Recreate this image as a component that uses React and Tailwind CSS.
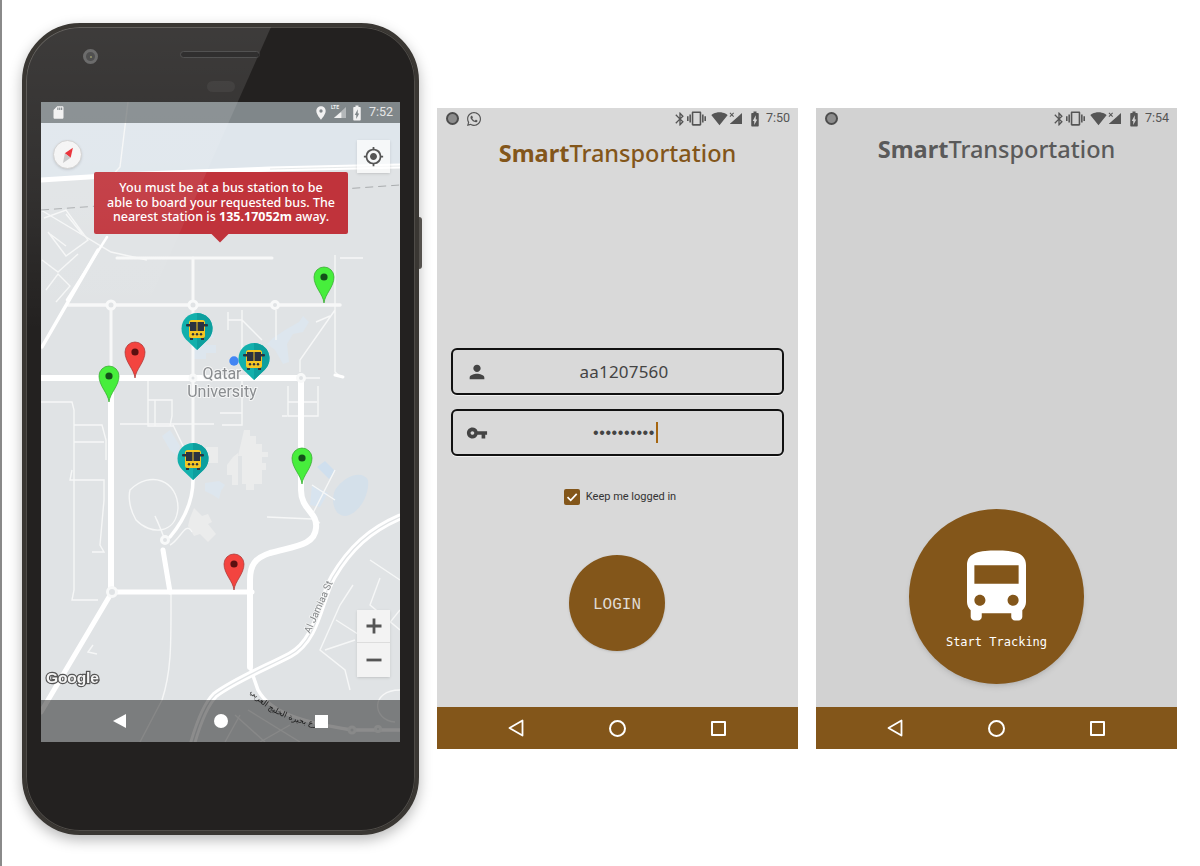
import React from "react";
import {
  MdPerson,
  MdVpnKey,
  MdBluetooth,
  MdVibration,
  MdSignalWifi4Bar,
  MdBatteryChargingFull,
  MdLocationOn,
  MdSdCard,
  MdGpsFixed,
} from "react-icons/md";
import { FaWhatsapp } from "react-icons/fa";

const titleFont = "font-['Noto_Sans',sans-serif]";

const Pin = ({ x, y, color = "green" }) => {
  const fill = color === "green" ? "#47ee3c" : "#f3443f";
  const edge = color === "green" ? "#2fa52a" : "#a83230";
  const dot = color === "green" ? "#14501a" : "#5a1010";
  return (
    <g transform={`translate(${x - 10} ${y - 36})`}>
      <path d="M10 36C9 27 0 20 0 10A10 10 0 0 1 20 10C20 20 11 27 10 36Z" fill={fill} stroke={edge} strokeWidth="0.7" />
      <circle cx="10" cy="10" r="3.6" fill={dot} />
    </g>
  );
};

const BusPin = ({ x, y }) => (
  <g transform={`translate(${x - 15.5} ${y - 37})`}>
    <path d="M15.5 37L4.5 26.5A15.5 15.5 0 1 1 26.5 26.5Z" fill="#12b0ac" strokeLinejoin="round" />
    <path d="M15.5 37L26.5 26.5A15.5 15.5 0 0 0 15.5 0Z" fill="#0d9f9e" />
    <rect x="7.5" y="7" width="16" height="18" rx="2.5" fill="#f5c623" />
    <rect x="4.5" y="11" width="22" height="2.5" rx="1" fill="#2b3240" />
    <rect x="8.5" y="9" width="14" height="9" fill="#2b3240" />
    <rect x="15" y="9" width="1" height="9" fill="#f5c623" />
    <circle cx="11.5" cy="21.3" r="1.2" fill="#2b3240" />
    <circle cx="15.5" cy="21.3" r="1.2" fill="#2b3240" />
    <circle cx="19.5" cy="21.3" r="1.2" fill="#2b3240" />
    <rect x="8.5" y="25" width="3" height="2" fill="#2b3240" />
    <rect x="19.5" y="25" width="3" height="2" fill="#2b3240" />
  </g>
);

const MapDrawing = () => (
  <svg viewBox="41 102 359 640" className="block w-full h-full blur-[0.4px]">
    <defs>
      <path id="arabic-road" d="M250 692C262 708 282 718 300 723C315 727 325 729 345 730" />
    </defs>
    <rect x="41" y="102" width="359" height="640" fill="#e0e3e5" />
    <path d="M41 102H400V166L41 180Z" fill="#dfe6ec" />

    {/* buildings and water */}
    <g fill="#dde6ee">
      <path d="M200 330h12l2 8h-8v7h10v8h-10v6h-14v-16h8z" />
      <path d="M273 338l12-8 14-8 4-6 6 6 -6 10-10 2-6 10 2 18-6 2-8-14-8-6z" />
      <path d="M170 430l10 16 -2 10-8-6-8-14z" />
      <path d="M205 483l14-2 6 4-4 6-2 8-6-4-8-4z" />
      <path d="M317 467l8-6 10 10-6 8z" fill="#cfdfee" />
      <path d="M312 485l8 4 8 4-8 14-10-2z" fill="#d8e4ef" />
      <path d="M335 490C345 475 362 470 368 480C370 495 358 515 345 516C335 516 330 502 335 490Z" fill="#d4e0ea" />
    </g>
    <g fill="#ebecec">
      <path d="M244 430h6v6h6v8h6v8h6v5h-6v6h4v7h-4v14h-8v6h-8v-6h-4v-28h-4z" />
      <path d="M233 457l5-4v32h-6v-10h-5v-10z" />
      <path d="M206 447h12v16h-12z" />
      <path d="M194 508l8 8 6-2 4 8 -4 2 8 10-8 8-8-8-6 2-6-10 2-8z" />
    </g>

    {/* thin lanes and blocks */}
    <g fill="none" stroke="#f6f7f7" strokeWidth="1.4">
      <path d="M128 102L120 167L108 180" />
      <path d="M41 210l30 18 40 24 36 8" />
      <path d="M44 218l22-8 22 30-22 16-18-24M50 234l16 12M66 214l16 20M42 260l16 12 20-18M46 290l12-16 12 12-14 16" />
      <path d="M41 402H72L74 410V540L74 590L72 600L98 600" />
      <path d="M74 425H102L106 440V460M74 442H104M72 470L70 480H104V500L100 545L104 552H92" />
      <path d="M148 378V426H174M148 400H172V416L170 426H148M155 400V426M120 424H214" />
      <path d="M242 413H220M242 378V425H222M242 310V358M228 320H242L262 340M228 312V330" />
      <path d="M284 378H320M288 386V416H318V386M288 402H317M287 416H282" />
      <path d="M276 310V340M335 255V372L340 376M340 258H363M335 310L300 360L300 372M316 322L330 316" />
      <path d="M173 425L185 450" />
      <path d="M130 490C150 470 178 480 178 508C176 535 150 535 136 520C130 510 128 498 130 490Z" />
      <path d="M157 520L165 540M155 516L162 532M192 532C186 520 180 540 170 545" />
      <path d="M267 517L312 519L320 523M335 470L312 515M312 485L335 500" />
      <path d="M171 592C171 640 172 670 162 700L140 742" />
      <path d="M336 620L375 645M353 585L340 605L320 650L345 670L350 690M400 610L360 660M370 560L400 580M380 578L370 605L400 630M325 650L355 640" />
      <path d="M400 690C370 690 372 720 395 722" />
      <path d="M235 715L265 742M248 710L300 742M290 725L260 742M225 742L240 715" />
      <path d="M93 645L88 652L97 654" />
    </g>

    {/* main roads */}
    <g fill="none" stroke="#ffffff" strokeLinecap="round">
      <path d="M41 180L120 175L270 169L400 166" strokeWidth="5" />
      <path d="M68 305H340" strokeWidth="3.5" stroke="#f7f8f8" />
      <path d="M117 258H272" strokeWidth="3" stroke="#f7f8f8" />
      <path d="M98 250L42 347" strokeWidth="3.5" />
      <path d="M107 237L67 300" strokeWidth="2.5" />
      <path d="M111 305V378M193 258V478" strokeWidth="3" stroke="#f7f8f8" />
      <path d="M41 378H302" strokeWidth="6" />
      <path d="M111 378V592" strokeWidth="6" />
      <path d="M301 378V490C301 510 318 512 316 528C315 545 295 546 270 553C255 558 250 565 250 580V667" strokeWidth="6" />
      <path d="M112 592H252" strokeWidth="5" />
      <path d="M112 592L41 712" strokeWidth="5" />
      <path d="M163 550L170 592" strokeWidth="5" />
      <path d="M193 480C193 505 180 525 170 537" strokeWidth="3.5" />
      <path d="M335 375L343 377" strokeWidth="3" />
      <path d="M400 517C370 530 350 548 333 577C320 600 318 640 290 655C265 668 235 680 215 695C205 705 198 725 193 742" strokeWidth="7" />
      <path d="M250 667L258 690C270 712 300 722 352 730H400" strokeWidth="3.5" />
    </g>
    <path d="M400 517C370 530 350 548 333 577C320 600 318 640 290 655C265 668 235 680 215 695C205 705 198 725 193 742" fill="none" stroke="#e0e3e5" strokeWidth="1.3" />
    <path d="M270 169L400 166" fill="none" stroke="#e0e3e5" strokeWidth="0.8" />
    <g fill="#e0e3e5" stroke="#f8f9f9" strokeWidth="3">
      <circle cx="111" cy="305" r="4" />
      <circle cx="193" cy="305" r="4" />
      <circle cx="275" cy="305" r="3.5" />
      <circle cx="193" cy="378" r="3" />
      <circle cx="301" cy="378" r="3.5" />
      <circle cx="112" cy="592" r="4.5" />
      <circle cx="165" cy="540" r="3.5" />
      <circle cx="352" cy="730" r="3" />
      <circle cx="378" cy="729" r="2.5" />
    </g>
    <path d="M41 210L400 185" stroke="#a9acae" strokeWidth="1" strokeDasharray="8 5" fill="none" />

    {/* map labels */}
    <g fontFamily="Roboto, sans-serif" fill="#8a8d90" textAnchor="middle" fontSize="16" stroke="#f4f5f5" strokeWidth="2" paintOrder="stroke">
      <text x="222" y="379">Qatar</text>
      <text x="222" y="397">University</text>
    </g>
    <text x="0" y="0" transform="translate(310 634) rotate(-66)" fontFamily="Roboto, sans-serif" fontSize="10" fill="#85888a" stroke="#f4f5f5" strokeWidth="1.5" paintOrder="stroke">Al Jamiaa St</text>
    <text fontFamily="'DejaVu Sans', sans-serif" fontSize="8" fill="#333333">
      <textPath href="#arabic-road">شارع بحيرة الخليج العربي</textPath>
    </text>
    <text x="46" y="683" fontFamily="'Liberation Sans', sans-serif" fontSize="15.5" fontWeight="700" fill="#f5f5f5" stroke="#555555" strokeWidth="2.4" paintOrder="stroke" letterSpacing="-0.1">Google</text>

    {/* markers */}
    <Pin x={324} y={303} />
    <Pin x={135} y={378} color="red" />
    <Pin x={109} y={402} />
    <Pin x={302} y={484} />
    <Pin x={234} y={590} color="red" />
    <circle cx="234" cy="361" r="4.7" fill="#4285f4" />
    <BusPin x={197} y={350} />
    <BusPin x={254} y={380} />
    <BusPin x={193} y={480} />
  </svg>
);

const Compass = () => (
  <svg viewBox="0 0 30 30" className="w-[30px] h-[30px]">
    <path d="M21 7L18.5 18L12 13Z" fill="#e8242c" />
    <path d="M12 13L18.5 18L10 24Z" fill="#c4c5c6" />
  </svg>
);

const SignalIcon = ({ color, x }) => (
  <svg viewBox="0 0 16 14" className="w-[15px] h-[13px]">
    <path d="M15 1V13H2Z" fill={color} opacity={x ? 1 : 0.45} />
    <path d="M10 7V13H2L9 7Z" fill={color} />
    {x && <path d="M2 1l4 4M6 1L2 5" stroke={color} strokeWidth="1.1" />}
  </svg>
);

const PhoneScreen = () => (
  <div className="relative w-[359px] h-[640px] mx-auto overflow-hidden">
    <MapDrawing />

    <div className="absolute inset-x-0 top-0 h-[21px] bg-[#41474a]/60 flex items-center pl-[10px] pr-[7px] text-[#f1f1f1]">
      <MdSdCard size={15} />
      <div className="ml-auto flex items-center">
        <MdLocationOn size={16} />
        <div className="relative ml-[3px]">
          <SignalIcon color="#f1f1f1" />
          <span className="absolute left-[-1px] top-[-2px] text-[5px] font-bold font-['Roboto',sans-serif]">LTE</span>
        </div>
        <MdBatteryChargingFull size={18} className="ml-[1px]" />
        <span className="text-[12.5px] ml-[3px] text-[#e6e6e6] font-['Roboto',sans-serif]">7:52</span>
      </div>
    </div>

    <div className="absolute left-[12px] top-[38px] w-[29px] h-[29px] rounded-full bg-[#f4f4f4] border border-[#cfcfcf] shadow-sm flex items-center justify-center">
      <Compass />
    </div>
    <div className="absolute left-[316px] top-[38px] w-[33px] h-[33px] bg-white/70 shadow-sm flex items-center justify-center text-[#555555]">
      <MdGpsFixed size={21} />
    </div>

    <div className={`absolute left-[53px] top-[70px] w-[254px] h-[62px] rounded-[2px] bg-[#c0333b] text-white text-center flex items-center justify-center text-[12.5px] leading-[14.5px] font-medium font-['Noto_Sans',sans-serif]`}>
      <p>
        You must be at a bus station to be<br />
        able to board your requested bus. The<br />
        nearest station is <b className="font-bold">135.17052m</b> away.
      </p>
      <div className="absolute left-[120px] bottom-[-6px] w-[12px] h-[12px] rotate-45 bg-[#c0333b]" />
    </div>

    <div className="absolute left-[316px] top-[508px] w-[33px] h-[67px] bg-[#f3f3f3] shadow-sm flex flex-col text-[#555555]">
      <div className="h-[33px] flex items-center justify-center border-b border-[#dddddd]">
        <svg viewBox="0 0 24 24" className="w-[24px] h-[24px]"><path d="M12 4.5v15M4.5 12h15" stroke="currentColor" strokeWidth="2.8" fill="none" /></svg>
      </div>
      <div className="flex-1 flex items-center justify-center">
        <svg viewBox="0 0 24 24" className="w-[24px] h-[24px]"><path d="M4.5 12h15" stroke="currentColor" strokeWidth="2.8" fill="none" /></svg>
      </div>
    </div>

    <div className="absolute inset-x-0 bottom-0 h-[42px] bg-black/45 flex items-center justify-center gap-[87px]">
      <svg viewBox="0 0 14 14" className="w-[14px] h-[14px]"><path d="M13 0V14L0 7Z" fill="#ffffff" /></svg>
      <div className="w-[14px] h-[14px] rounded-full bg-white" />
      <div className="w-[13px] h-[13px] bg-white" />
    </div>
  </div>
);

const Phone = () => (
  <div className="relative w-[397px] h-[812px] ml-[20px] mt-[23px] rounded-[58px] bg-[#232120] border-[4px] border-[#3a3733] shadow-[0_5px_14px_rgba(0,0,0,0.28),inset_0_0_0_1px_#4f4c48]">
    <div className="absolute right-[-7px] top-[190px] w-[3px] h-[52px] bg-[#55524e] rounded-r-sm" />

    <div className="h-[75px] relative">
      <div className="absolute left-[57px] top-[22px] w-[15px] h-[15px] rounded-full bg-[#3a3a3a] border-[3px] border-[#5a5a5a] flex items-center justify-center">
        <div className="w-[2px] h-[2px] rounded-full bg-[#8a8a5a]" />
      </div>
      <div className="absolute left-[154px] top-[24px] w-[80px] h-[7px] rounded-full bg-[#161515] border border-[#3c3c3c]" />
      <div className="absolute left-[181px] top-[54px] w-[28px] h-[11px] rounded-full bg-[#2e2c2b]" />
    </div>

    <PhoneScreen />

    <svg viewBox="0 0 389 804" className="absolute inset-0 w-full h-full rounded-[54px] pointer-events-none">
      <defs>
        <linearGradient id="gloss" x1="0" y1="0" x2="0" y2="1">
          <stop offset="0" stopColor="#ffffff" stopOpacity="0.12" />
          <stop offset="0.3" stopColor="#ffffff" stopOpacity="0.07" />
          <stop offset="0.55" stopColor="#ffffff" stopOpacity="0" />
        </linearGradient>
      </defs>
      <path d="M0 54Q0 0 54 0H245L0 552Z" fill="url(#gloss)" />
    </svg>
  </div>
);

const NavBar = () => (
  <div className="h-[42px] bg-[#83561a] flex items-center justify-center gap-[85px] pr-[2px]">
    <svg viewBox="0 0 16 18" className="w-[16px] h-[18px]"><path d="M14.5 1.5V16.5L1.5 9Z" fill="none" stroke="#ffffff" strokeWidth="1.8" strokeLinejoin="round" /></svg>
    <div className="w-[17px] h-[17px] rounded-full border-2 border-white" />
    <div className="w-[15px] h-[15px] rounded-[1px] border-2 border-white" />
  </div>
);

const AppStatus = ({ time, whatsapp }) => (
  <div className="h-[21px] shrink-0 flex items-center pl-[9px] pr-[8px] text-[#555555]">
    <div className="w-[13px] h-[13px] rounded-full bg-[#8d8d8d] border-2 border-[#4d4d4d]" />
    {whatsapp && <FaWhatsapp size={16} className="ml-[7px]" />}
    <div className="ml-auto flex items-center">
      <MdBluetooth size={16} />
      <MdVibration size={19} className="ml-[-1px]" />
      <MdSignalWifi4Bar size={17} className="ml-[5px]" />
      <SignalIcon color="#555555" x />
      <MdBatteryChargingFull size={18} className="ml-[3px]" />
      <span className="ml-[2px] text-[12.5px] font-['Roboto',sans-serif]">{time}</span>
    </div>
  </div>
);

const Title = ({ color, className }) => (
  <h1 className={`${titleFont} text-center text-[23.5px] leading-[32px] font-medium ${color} ${className}`}>
    <span className="font-bold">Smart</span>Transportation
  </h1>
);

const Field = ({ icon, children }) => (
  <div className="h-[47px] mx-[14px] flex items-center rounded-[6px] border-2 border-[#111111] pl-[13px] pr-[22px] text-[#444444] shadow-[0_1px_0_#f2f2f2]">
    {icon}
    <div className="flex-1 flex justify-center items-center">{children}</div>
  </div>
);

const LoginScreen = () => (
  <div className="w-[361px] h-[641px] flex flex-col bg-[#d9d9d9]">
    <AppStatus time="7:50" whatsapp />
    <Title color="text-[#83561a]" className="mt-[8px]" />

    <div className="mt-[179px] flex flex-col gap-[14px]">
      <Field icon={<MdPerson size={22} />}>
        <span className={`${titleFont} text-[17px] tracking-[0.2px] pt-[1px]`}>aa1207560</span>
      </Field>
      <Field icon={<MdVpnKey size={22} />}>
        <span className="relative font-['Liberation_Sans',sans-serif] text-[16px] tracking-[0.6px]">
          ••••••••••
          <span className="absolute right-[-3px] top-[1px] w-[2px] h-[21px] bg-[#a5650f]" />
        </span>
      </Field>
    </div>

    <div className="mt-[33px] flex items-center justify-center gap-[6px] pl-[5px]">
      <div className="w-[16px] h-[16px] rounded-[2px] bg-[#83561a] flex items-center justify-center">
        <svg viewBox="0 0 16 16" className="w-[16px] h-[16px]"><path d="M3.5 8.2L6.7 11.3L12.7 4.8" fill="none" stroke="#ffffff" strokeWidth="1.7" /></svg>
      </div>
      <span className="text-[11px] leading-[16px] text-[#333333] font-['Roboto',sans-serif]">Keep me logged in</span>
    </div>

    <div className="mt-[50px] ml-[132px] w-[96px] h-[96px] pt-[3px] rounded-full bg-[#83561a] shadow-sm flex items-center justify-center text-[#e0dcd5] text-[16px] font-['Liberation_Mono',monospace]">
      LOGIN
    </div>

    <div className="mt-auto"><NavBar /></div>
  </div>
);

const TrackScreen = () => (
  <div className="w-[361px] h-[641px] flex flex-col bg-[#d2d2d2]">
    <AppStatus time="7:54" />
    <Title color="text-[#5a5a5a]" className="mt-[4px]" />

    <div className="mt-auto mb-[23px] mx-auto w-[175px] h-[175px] rounded-full bg-[#83561a] shadow-md flex flex-col items-center pt-[41px] text-white">
      <svg viewBox="4 2 16 19" className="w-[59px] h-[71px]" fill="currentColor">
        <path d="M4 16c0 .88.39 1.67 1 2.22V20c0 .55.45 1 1 1h1c.55 0 1-.45 1-1v-1h8v1c0 .55.45 1 1 1h1c.55 0 1-.45 1-1v-1.78c.61-.55 1-1.34 1-2.22V6c0-3.5-3.58-4-8-4s-8 .5-8 4v10zm3.5 1c-.83 0-1.5-.67-1.5-1.5S6.67 14 7.5 14s1.5.67 1.5 1.5S8.33 17 7.5 17zm9 0c-.83 0-1.5-.67-1.5-1.5s.67-1.5 1.5-1.5 1.5.67 1.5 1.5-.67 1.5-1.5 1.5zm1.5-6H6V6h12v5z" />
      </svg>
      <span className="mt-[13px] text-[12px] leading-[16px] font-['DejaVu_Sans_Mono',monospace]">Start Tracking</span>
    </div>

    <NavBar />
  </div>
);

export default function App() {
  return (
    <div className="w-[1200px] h-[866px] bg-white overflow-hidden flex border-l-2 border-[#8a8a8a]">
      <Phone />
      <div className="ml-[18px] mt-[108px] flex gap-[18px] items-start">
        <LoginScreen />
        <TrackScreen />
      </div>
    </div>
  );
}
